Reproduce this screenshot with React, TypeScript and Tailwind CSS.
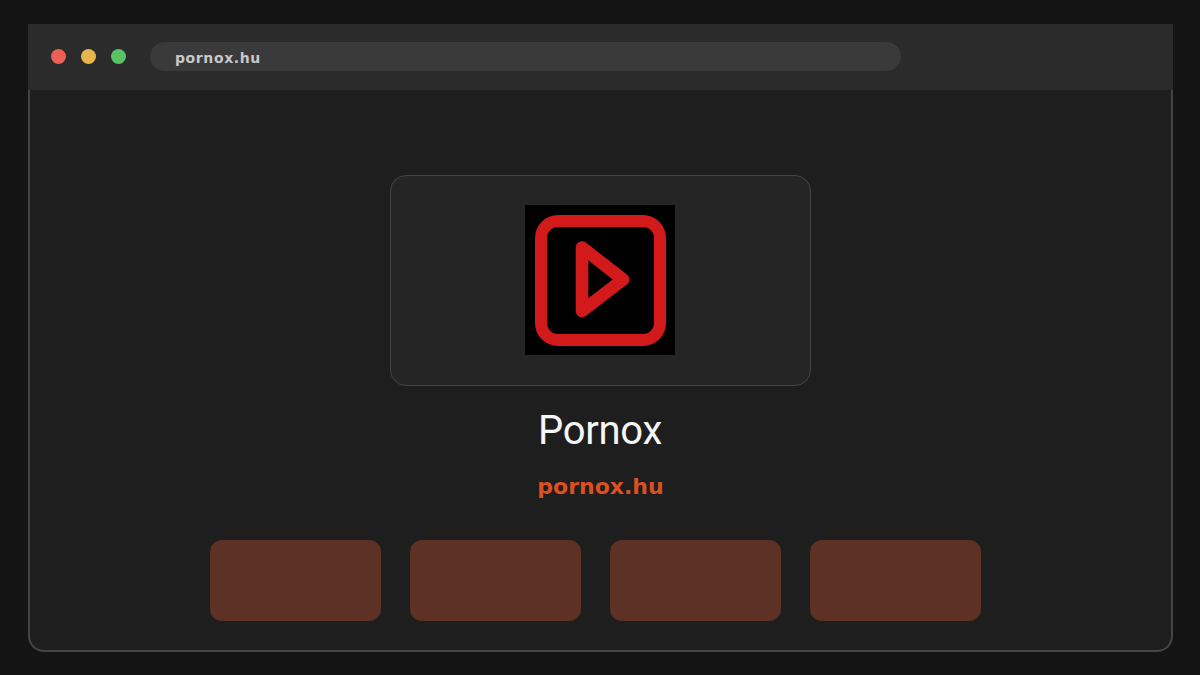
export default function App() {
  return (
    <div className="w-[1200px] h-[675px] bg-[#141414] pt-[24px] pl-[28px] overflow-hidden" style={{ fontFamily: '"Liberation Sans", sans-serif' }}>
      <div className="w-[1145px] h-[628px] flex flex-col">
        <div className="h-[66px] bg-[#2b2b2b] flex items-center pl-[23px] pb-[2px] shrink-0">
          <div className="w-[15px] h-[15px] rounded-full bg-[#ec5f57]" />
          <div className="w-[15px] h-[15px] rounded-full bg-[#e8b54b] ml-[15px]" />
          <div className="w-[15px] h-[15px] rounded-full bg-[#57c365] ml-[15px]" />
          <div className="w-[751px] h-[29px] rounded-full bg-[#3a3a3a] ml-[24px] pl-[25px] pt-[4px] flex items-center text-[14px] tracking-[0.6px] font-bold text-[#c8c8c8]" style={{ fontFamily: '"DejaVu Sans", sans-serif' }}>
            pornox.hu
          </div>
        </div>
        <div className="flex-1 bg-[#1e1e1e] border-x-2 border-b-2 border-[#444444] rounded-b-[16px] flex flex-col items-center pt-[85px]">
          <div className="w-[421px] h-[211px] bg-[#252525] border border-[#444444] rounded-[16px] flex items-center justify-center pb-[1px] pr-[1px]">
            <div className="w-[150px] h-[150px] bg-black">
              <svg width="150" height="150" viewBox="0 0 150 150" fill="none" stroke="#d21a1a" strokeWidth="12" strokeLinejoin="round" strokeLinecap="round">
                <rect x="16" y="16" width="119" height="119" rx="17" />
                <path d="M57 42.5 L98 74.5 L57 106 Z" strokeWidth="12.6" />
              </svg>
            </div>
          </div>
          <div className="mt-[20px] text-[40px] leading-[50px] tracking-[-0.3px] text-[#f5f5f5] mr-[1px]" style={{ fontFamily: 'Roboto, sans-serif' }}>Pornox</div>
          <div className="mt-[16px] text-[22px] leading-[30px] font-bold text-[#dc4f1f]" style={{ fontFamily: '"DejaVu Sans", sans-serif' }}>pornox.hu</div>
          <div className="mt-[38px] flex gap-[29px] mr-[10px]">
            <div className="w-[171px] h-[81px] rounded-[12px] bg-[#5d3124]" />
            <div className="w-[171px] h-[81px] rounded-[12px] bg-[#5d3124]" />
            <div className="w-[171px] h-[81px] rounded-[12px] bg-[#5d3124]" />
            <div className="w-[171px] h-[81px] rounded-[12px] bg-[#5d3124]" />
          </div>
        </div>
      </div>
    </div>
  );
}
